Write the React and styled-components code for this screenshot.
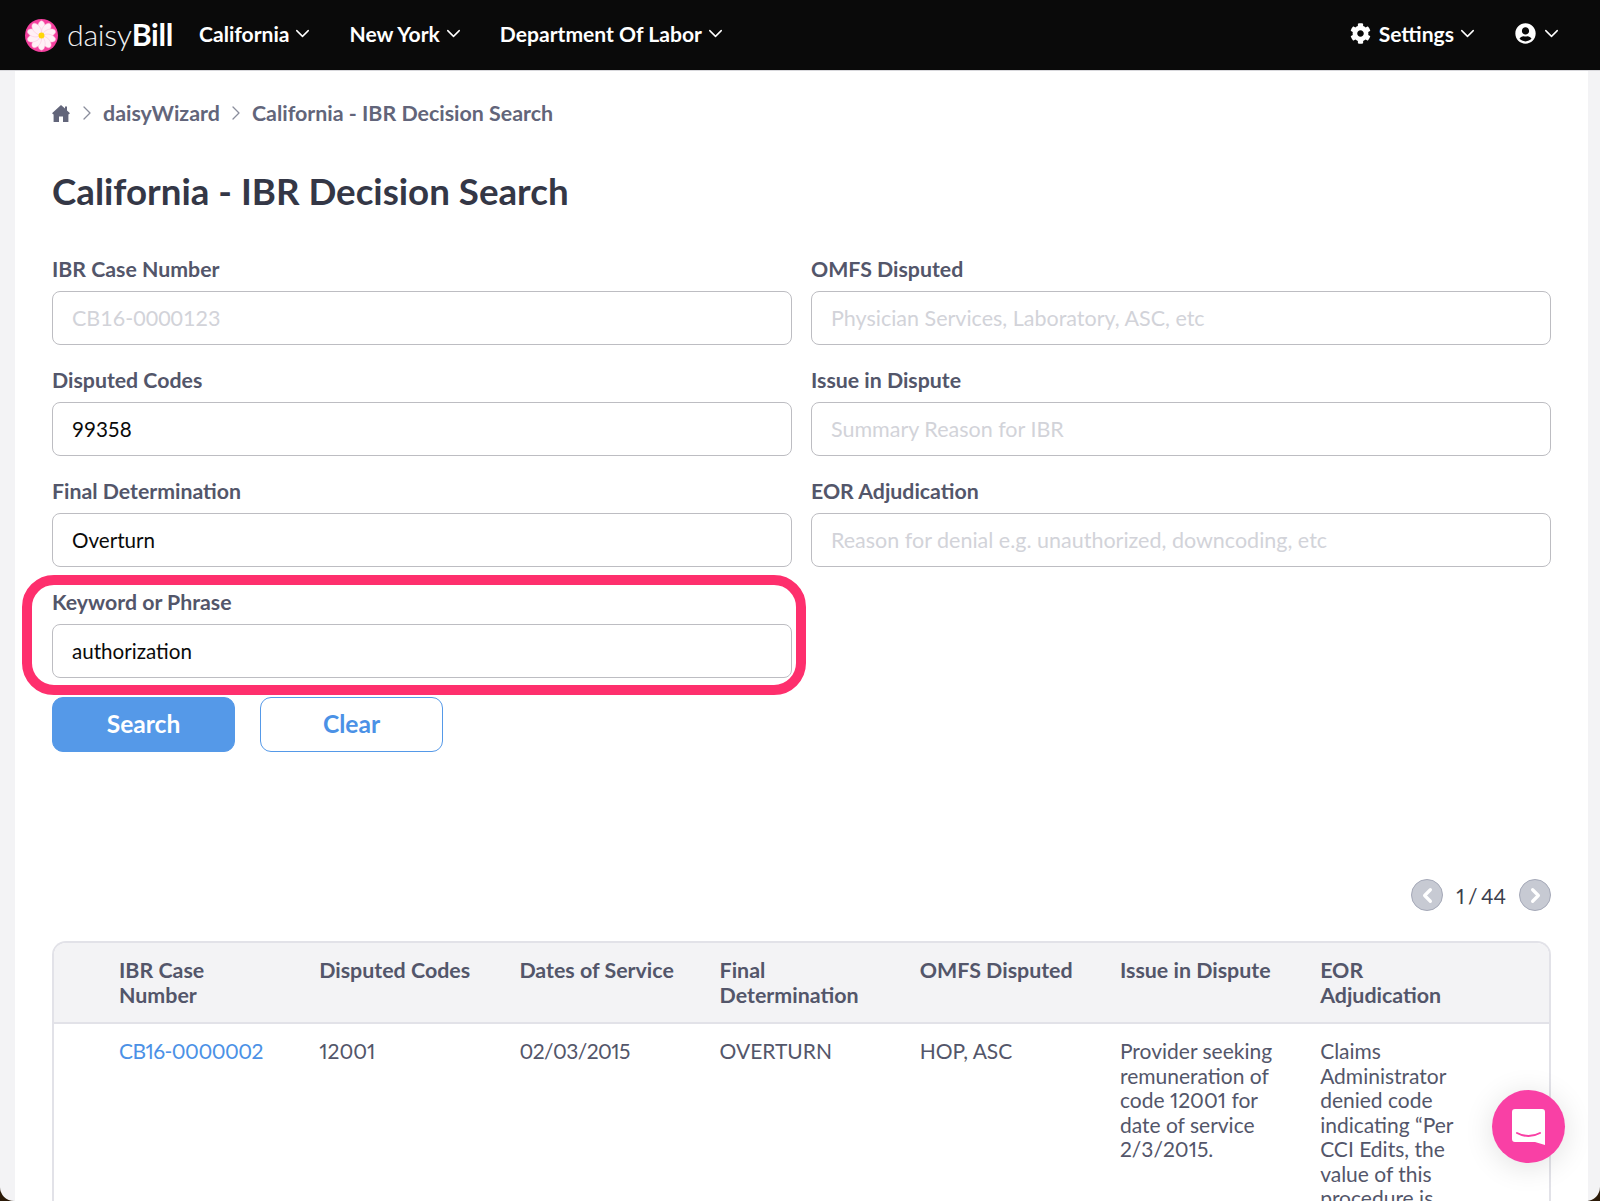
import React from 'react';
import styled, { createGlobalStyle } from 'styled-components';
import { FaCog, FaUserCircle } from 'react-icons/fa';
import { ChevronDown, ChevronRight, ChevronLeft } from 'lucide-react';

const Global = createGlobalStyle`
  html, body { margin: 0; padding: 0; background: #2b1a08; }
  body { font-family: "Lato", "Liberation Sans", sans-serif; overflow: hidden; font-feature-settings: "pnum" 1; }
  * { box-sizing: border-box; }
`;

const Frame = styled.div`
  width: 1600px; height: 1201px; overflow: hidden; position: relative;
  background: #f3f3f5; border-radius: 0 0 14px 14px;
  display: flex; flex-direction: column;
`;
const TopBar = styled.header`
  height: 71px; flex: none; background: #0a0a0a; border-bottom: 1.5px solid #d8d8dc;
  display: flex; align-items: center; padding: 0 23px 3px 25px; color: #fff;
`;
const Brand = styled.div`display: flex; align-items: center; gap: 9px; margin-right: 26px;`;
const LogoMark = styled.svg`margin-top: 3px; flex: none;`;
const BrandText = styled.span`
  font-size: 30.4px; font-weight: 300; letter-spacing: -0.3px; color: #f2f2f2;
  b { font-weight: 700; color: #fff; }
`;
const NavItem = styled.div`
  display: flex; align-items: center; gap: 2px; font-size: 21.1px; font-weight: 700;
  margin-right: ${p => p.$gap || 0}px; color: #fff;
  svg { flex: none; }
`;
const Spacer = styled.div`flex: 1;`;
const GearIcon = styled(FaCog)`margin-right: 6px;`;
const UserIcon = styled(FaUserCircle)`margin-right: 2px;`;
const Main = styled.main`
  flex: 1; margin: 0 12px 0 15px; background: #fff; padding: 0 37px; min-height: 0; overflow: hidden;
`;
const Crumbs = styled.nav`
  display: flex; align-items: center; height: 24px; margin-top: 30px; color: #62657a;
  font-size: 21.4px; font-weight: 700;
`;
const CrumbSep = styled.span`display: flex; margin: 0 4px; color: #8a8d9c;`;
const HomeIcon = styled.svg`flex: none; margin-right: 1px;`;
const Title = styled.h1`
  margin: 44px 0 0; font-size: 36.7px; line-height: 44px; font-weight: 700; color: #343746;
`;
const FormGrid = styled.div`
  display: grid; grid-template-columns: 740px 740px; column-gap: 19px; row-gap: 22px; margin-top: 43px;
`;
const Field = styled.label`display: flex; flex-direction: column; position: relative;`;
const FieldLabel = styled.span`
  font-size: 21.3px; line-height: 25px; font-weight: 700; color: #53566a; height: 35px; padding-top: 1px;
`;
const Input = styled.input`
  width: 100%; height: 54px; border: 1.5px solid #bdbdc2; border-radius: 8px; padding: 0 19px;
  font: 400 20.6px "Lato", sans-serif; color: #0a0a0a; background: #fff; outline: none;
  &::placeholder { color: #d2d3d9; opacity: 1; font-size: 21.5px; }
`;
const Highlight = styled.div`
  position: absolute; left: -30px; top: -14px; width: 784px; height: 120px;
  border: 10px solid #fe2f6d; border-radius: 32px; pointer-events: none;
`;
const Actions = styled.div`display: flex; gap: 25px; margin-top: 19px;`;
const Button = styled.button`
  width: 183px; height: 55px; border-radius: 11px; font: 700 24.6px "Lato", sans-serif; cursor: pointer;
  border: 1.5px solid #5599e8; padding: 0 0 2px;
  background: ${p => (p.$primary ? '#5599e8' : '#fff')};
  color: ${p => (p.$primary ? '#fff' : '#4b91e6')};
`;
const Pager = styled.div`
  display: flex; justify-content: flex-end; align-items: center; margin-top: 127px; height: 32px;
  font-size: 21px; color: #3c3f4e; gap: 13px; word-spacing: -2px;
`;
const PageBtn = styled.span`
  width: 32px; height: 32px; border-radius: 50%; background: #c7cad3; border: 1.5px solid #a5a9b8;
  display: flex; align-items: center; justify-content: center; color: #fff;
`;
const TableCard = styled.div`
  margin-top: 30px; border: 2px solid #e2e2e8; border-bottom: 0; border-radius: 14px 14px 0 0; overflow: hidden;
`;
const TableHead = styled.div`
  display: grid; grid-template-columns: 65px repeat(7, 200.2px); height: 81px; padding-top: 15px;
  background: #f3f3f5; border-bottom: 2px solid #e2e2e8;
`;
const HeadCell = styled.div`
  font-size: 21.4px; line-height: 24.5px; font-weight: 700; color: #53566a; padding-right: 40px;
`;
const TableRow = styled.div`
  display: grid; grid-template-columns: 65px repeat(7, 200.2px); padding-top: 15px;
`;
const Cell = styled.div`
  font-size: 21px; line-height: 24.5px; color: #53566a; padding-right: 40px;
  letter-spacing: ${p => (p.$tight ? '-0.55px' : '0')};
`;
const CaseLink = styled.a`color: #4b91e6; text-decoration: none;`;
const ChatFab = styled.div`
  position: absolute; left: 1492px; top: 1090px; width: 73px; height: 73px; border-radius: 50%;
  background: #f940a5; box-shadow: 0 4px 30px rgba(0,0,0,.12);
  display: flex; align-items: center; justify-content: center;
`;

function Daisy() {
  const petals = Array.from({ length: 10 }, (_, i) => i * 36);
  return (
    <LogoMark width="33" height="33" viewBox="0 0 34 34">
      <circle cx="17" cy="17" r="17" fill="#f5409f" />
      {petals.map(a => (
        <ellipse key={a} cx="17" cy="8.5" rx="3.8" ry="6.6" fill="#fff0f6" stroke="#fbbfda" strokeWidth=".5" transform={`rotate(${a} 17 17)`} />
      ))}
      <circle cx="17" cy="17" r="3" fill="#ffd60a" />
    </LogoMark>
  );
}

const Chev = () => <ChevronDown size={23} strokeWidth={1.5} />;

const rows = [
  ['IBR Case Number', 'CB16-0000123', '', 'OMFS Disputed', 'Physician Services, Laboratory, ASC, etc', ''],
  ['Disputed Codes', '', '99358', 'Issue in Dispute', 'Summary Reason for IBR', ''],
  ['Final Determination', '', 'Overturn', 'EOR Adjudication', 'Reason for denial e.g. unauthorized, downcoding, etc', ''],
];
const heads = ['IBR Case Number', 'Disputed Codes', 'Dates of Service', 'Final Determination', 'OMFS Disputed', 'Issue in Dispute', 'EOR Adjudication'];

export default function App() {
  return (
    <Frame>
      <Global />
      <TopBar>
        <Brand>
          <Daisy />
          <BrandText>daisy<b>Bill</b></BrandText>
        </Brand>
        <NavItem $gap={35}>California <Chev /></NavItem>
        <NavItem $gap={35}>New York <Chev /></NavItem>
        <NavItem>Department Of Labor <Chev /></NavItem>
        <Spacer />
        <NavItem $gap={36}><GearIcon size={21} />Settings <Chev /></NavItem>
        <NavItem $gap={14}><UserIcon size={21} /> <Chev /></NavItem>
      </TopBar>
      <Main>
        <Crumbs>
          <HomeIcon width="18" height="19" viewBox="0 0 18 19" fill="#62657a">
            <path d="M9 1 L13 4.6 V2.5 H15 V6.4 L18 9.2 L16.4 10.4 V18 H11 V12.5 H7 V18 H1.6 V10.4 L0 9.2 Z" />
          </HomeIcon>
          <CrumbSep><ChevronRight size={24} strokeWidth={1.3} /></CrumbSep>
          daisyWizard
          <CrumbSep><ChevronRight size={24} strokeWidth={1.3} /></CrumbSep>
          California - IBR Decision Search
        </Crumbs>
        <Title>California - IBR Decision Search</Title>
        <FormGrid>
          {rows.map(r => (
            <React.Fragment key={r[0]}>
              <Field>
                <FieldLabel>{r[0]}</FieldLabel>
                <Input placeholder={r[1]} defaultValue={r[2]} />
              </Field>
              <Field>
                <FieldLabel>{r[3]}</FieldLabel>
                <Input placeholder={r[4]} defaultValue={r[5]} />
              </Field>
            </React.Fragment>
          ))}
          <Field>
            <FieldLabel>Keyword or Phrase</FieldLabel>
            <Input defaultValue="authorization" />
            <Highlight />
          </Field>
        </FormGrid>
        <Actions>
          <Button $primary>Search</Button>
          <Button>Clear</Button>
        </Actions>
        <Pager>
          <PageBtn><ChevronLeft size={23} strokeWidth={3.4} /></PageBtn>
          1 / 44
          <PageBtn><ChevronRight size={23} strokeWidth={3.4} /></PageBtn>
        </Pager>
        <TableCard>
          <TableHead>
            <span />
            {heads.map(h => <HeadCell key={h}>{h}</HeadCell>)}
          </TableHead>
          <TableRow>
            <span />
            <Cell $tight><CaseLink href="#">CB16-0000002</CaseLink></Cell>
            <Cell>12001</Cell>
            <Cell $tight>02/03/2015</Cell>
            <Cell>OVERTURN</Cell>
            <Cell>HOP, ASC</Cell>
            <Cell>Provider seeking remuneration of code 12001 for date of service 2/3/2015.</Cell>
            <Cell>Claims Administrator denied code indicating “Per CCI Edits, the value of this procedure is</Cell>
          </TableRow>
        </TableCard>
      </Main>
      <ChatFab>
        <svg width="33" height="36" viewBox="0 0 33 36">
          <path d="M3 0h27a3 3 0 0 1 3 3v33l-10-3H3a3 3 0 0 1-3-3V3a3 3 0 0 1 3-3z" fill="#fff" />
          <path d="M5 24c7 4 16 4 23 0" fill="none" stroke="#f940a5" strokeWidth="2" strokeLinecap="round" />
        </svg>
      </ChatFab>
    </Frame>
  );
}
